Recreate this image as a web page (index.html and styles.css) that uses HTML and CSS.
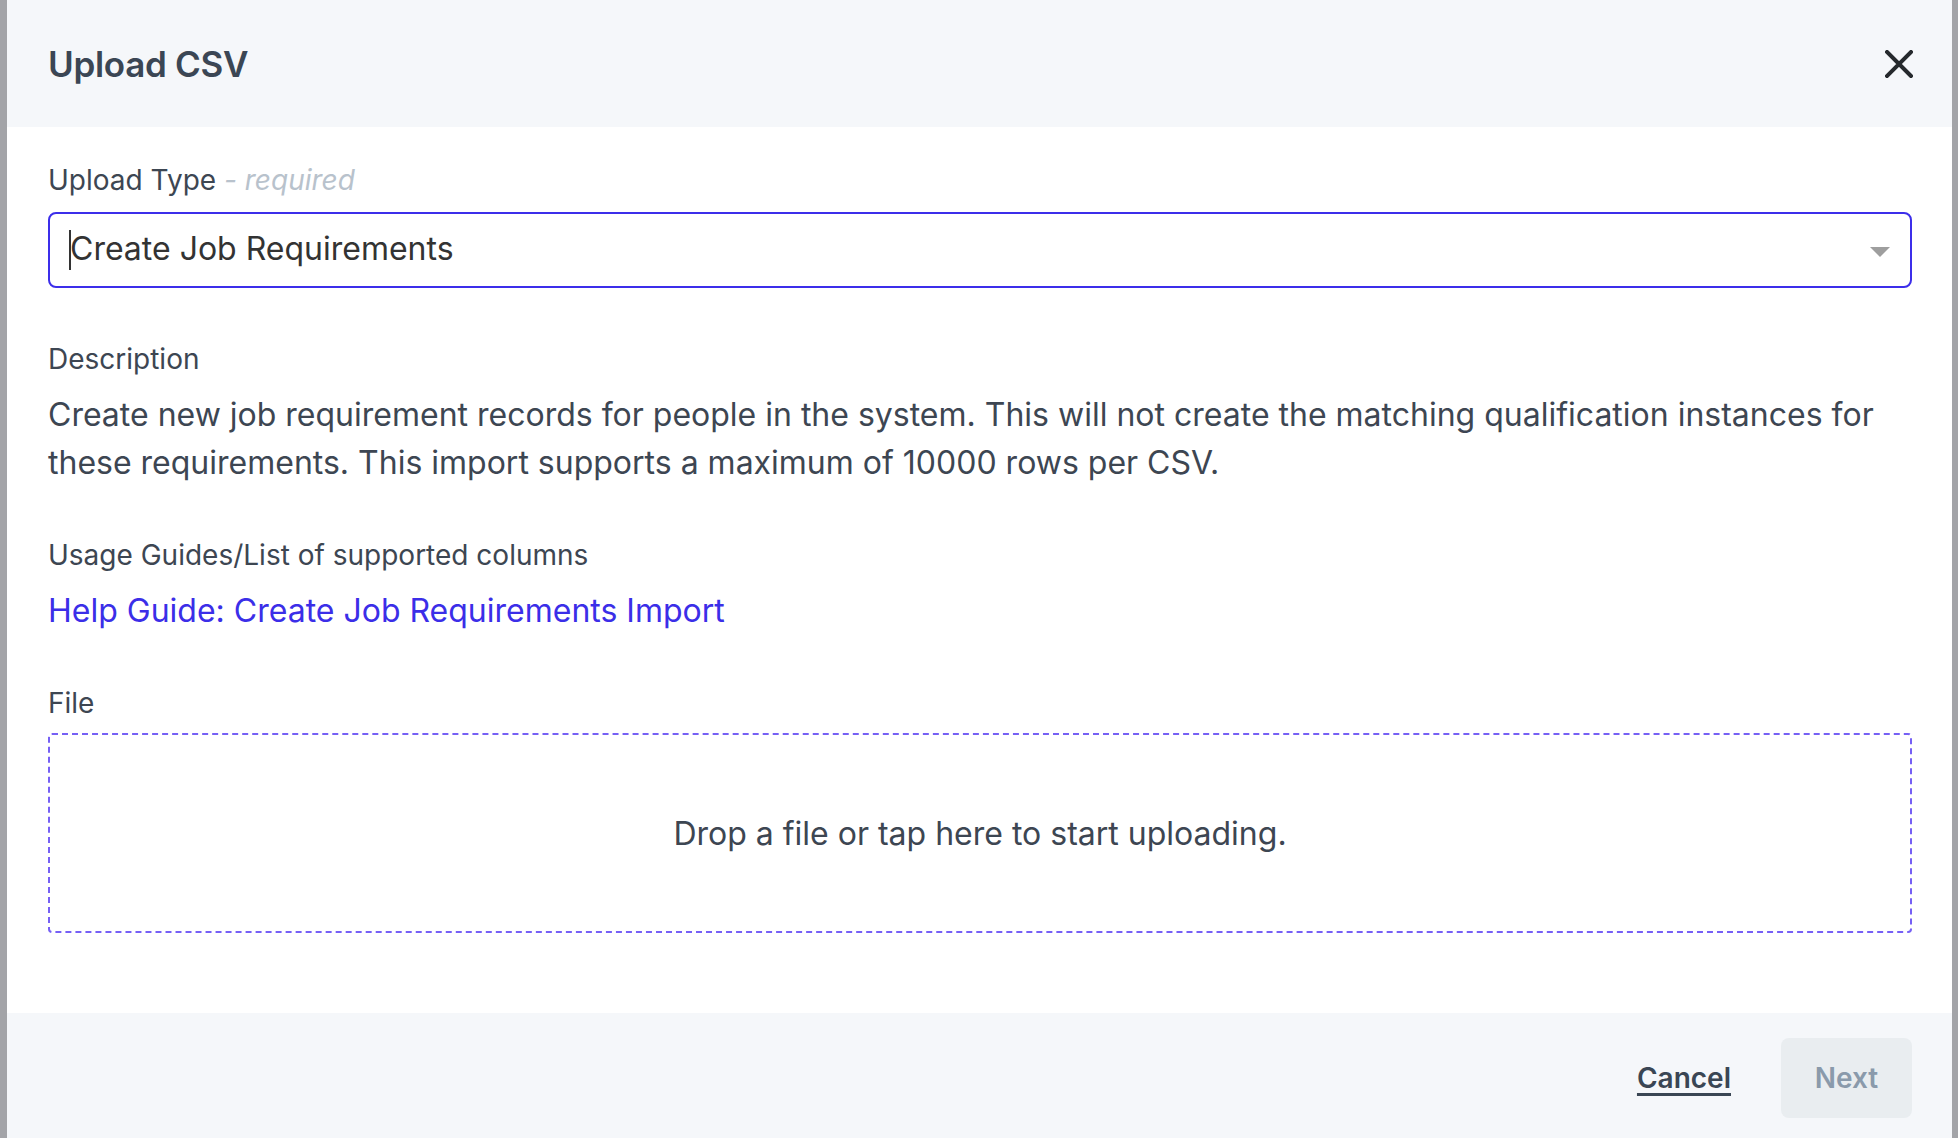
FILE: index.html
```html
<!DOCTYPE html>
<html lang="en">
<head>
    <meta charset="UTF-8">
    <meta name="viewport" content="width=device-width, initial-scale=1.0">
    <title>Upload CSV</title>
    <link rel="stylesheet" href="styles.css">
</head>
<body>

    <div class="modal">
        <!-- Header -->
        <div class="modal-header">
            <h2>Upload CSV</h2>
            <button class="close-btn" type="button" aria-label="Close">
                <svg width="28" height="28" viewBox="0 0 28 28">
                    <path d="M2 2 L26 26 M26 2 L2 26" stroke="#25292d" stroke-width="4" stroke-linecap="square" fill="none"/>
                </svg>
            </button>
        </div>

        <!-- Body -->
        <div class="modal-body">
            <div class="field field-select">
                <label class="field-label">Upload Type <span class="required">- required</span></label>
                <div class="select">
                    <span class="caret"></span>
                    <span class="select-value">Create Job Requirements</span>
                    <span class="select-arrow"></span>
                </div>
            </div>

            <div class="field">
                <div class="field-label">Description</div>
                <p class="description">Create new job requirement records for people in the system. This will not create the matching qualification instances for these requirements. This import supports a maximum of 10000 rows per CSV.</p>
            </div>

            <div class="field">
                <div class="field-label">Usage Guides/List of supported columns</div>
                <a class="guide-link" href="#">Help Guide: Create Job Requirements Import</a>
            </div>

            <div class="field">
                <div class="field-label">File</div>
                <div class="dropzone">Drop a file or tap here to start uploading.</div>
            </div>
        </div>

        <!-- Footer -->
        <div class="modal-footer">
            <a class="cancel-link" href="#">Cancel</a>
            <button class="next-btn" type="button" disabled>Next</button>
        </div>
    </div>

</body>
</html>
```

FILE: styles.css
```css
body {
    font-family: Inter, "Noto Sans", sans-serif;
    margin: 0;
    padding: 0 6px 0 7px;
    background-color: #a3a4a8;
    color: #3d4652;
}

.modal {
    height: 1138px;
    background: white;
    display: flex;
    flex-direction: column;
}

.modal-header {
    height: 127px;
    flex-shrink: 0;
    background: #f5f7fa;
    display: flex;
    align-items: center;
    justify-content: space-between;
    padding: 0 39px 0 41px;
    box-sizing: border-box;
}

.modal-header h2 {
    margin: 0;
    font-size: 35px;
    font-weight: 600;
    color: #3b4654;
    letter-spacing: -0.3px;
}

.close-btn {
    background: none;
    border: none;
    padding: 0;
    width: 28px;
    height: 28px;
    cursor: pointer;
    display: flex;
}

.modal-body {
    flex: 1;
    padding: 35px 40px 0 41px;
}

.field {
    margin-bottom: 50px;
}

.field.field-select {
    margin-bottom: 53px;
}

.field-label {
    display: block;
    font-size: 28px;
    line-height: 36px;
    margin-bottom: 14px;
}

.required {
    color: #b8c2cc;
    font-style: italic;
}

.select {
    height: 76px;
    box-sizing: border-box;
    border: 2px solid #3c2eea;
    border-radius: 8px;
    display: flex;
    align-items: center;
    padding: 0 20px 0 19px;
}

.caret {
    width: 2px;
    height: 40px;
    background: #333;
    margin-right: -1px;
}

.select-value {
    flex: 1;
    font-size: 32px;
    color: #333;
    padding-bottom: 4px;
}

.select-arrow {
    width: 0;
    height: 0;
    border-left: 10px solid transparent;
    border-right: 10px solid transparent;
    border-top: 10px solid #9e9e9e;
    margin-top: 4px;
}

.description {
    margin: 0;
    font-size: 32px;
    line-height: 48px;
}

.guide-link {
    font-size: 32px;
    line-height: 48px;
    color: #3b2ee8;
    text-decoration: none;
}

.dropzone {
    height: 200px;
    box-sizing: border-box;
    border: 2px dashed #7660f5;
    border-radius: 4px;
    display: flex;
    align-items: center;
    justify-content: center;
    font-size: 32px;
    margin-top: -2px;
}

.modal-footer {
    height: 125px;
    flex-shrink: 0;
    background: #f5f7fa;
    display: flex;
    align-items: center;
    justify-content: flex-end;
    gap: 50px;
    padding-right: 40px;
}

.cancel-link {
    font-size: 28px;
    font-weight: 600;
    color: #3a4654;
    text-decoration: underline;
    text-decoration-thickness: 3px;
    text-underline-offset: 5px;
    margin-top: 5px;
}

.next-btn {
    width: 131px;
    height: 80px;
    background: #e9edf0;
    border: none;
    border-radius: 8px;
    font-family: inherit;
    font-size: 28px;
    font-weight: 600;
    color: #8a9aab;
    margin-top: 4px;
}
```
